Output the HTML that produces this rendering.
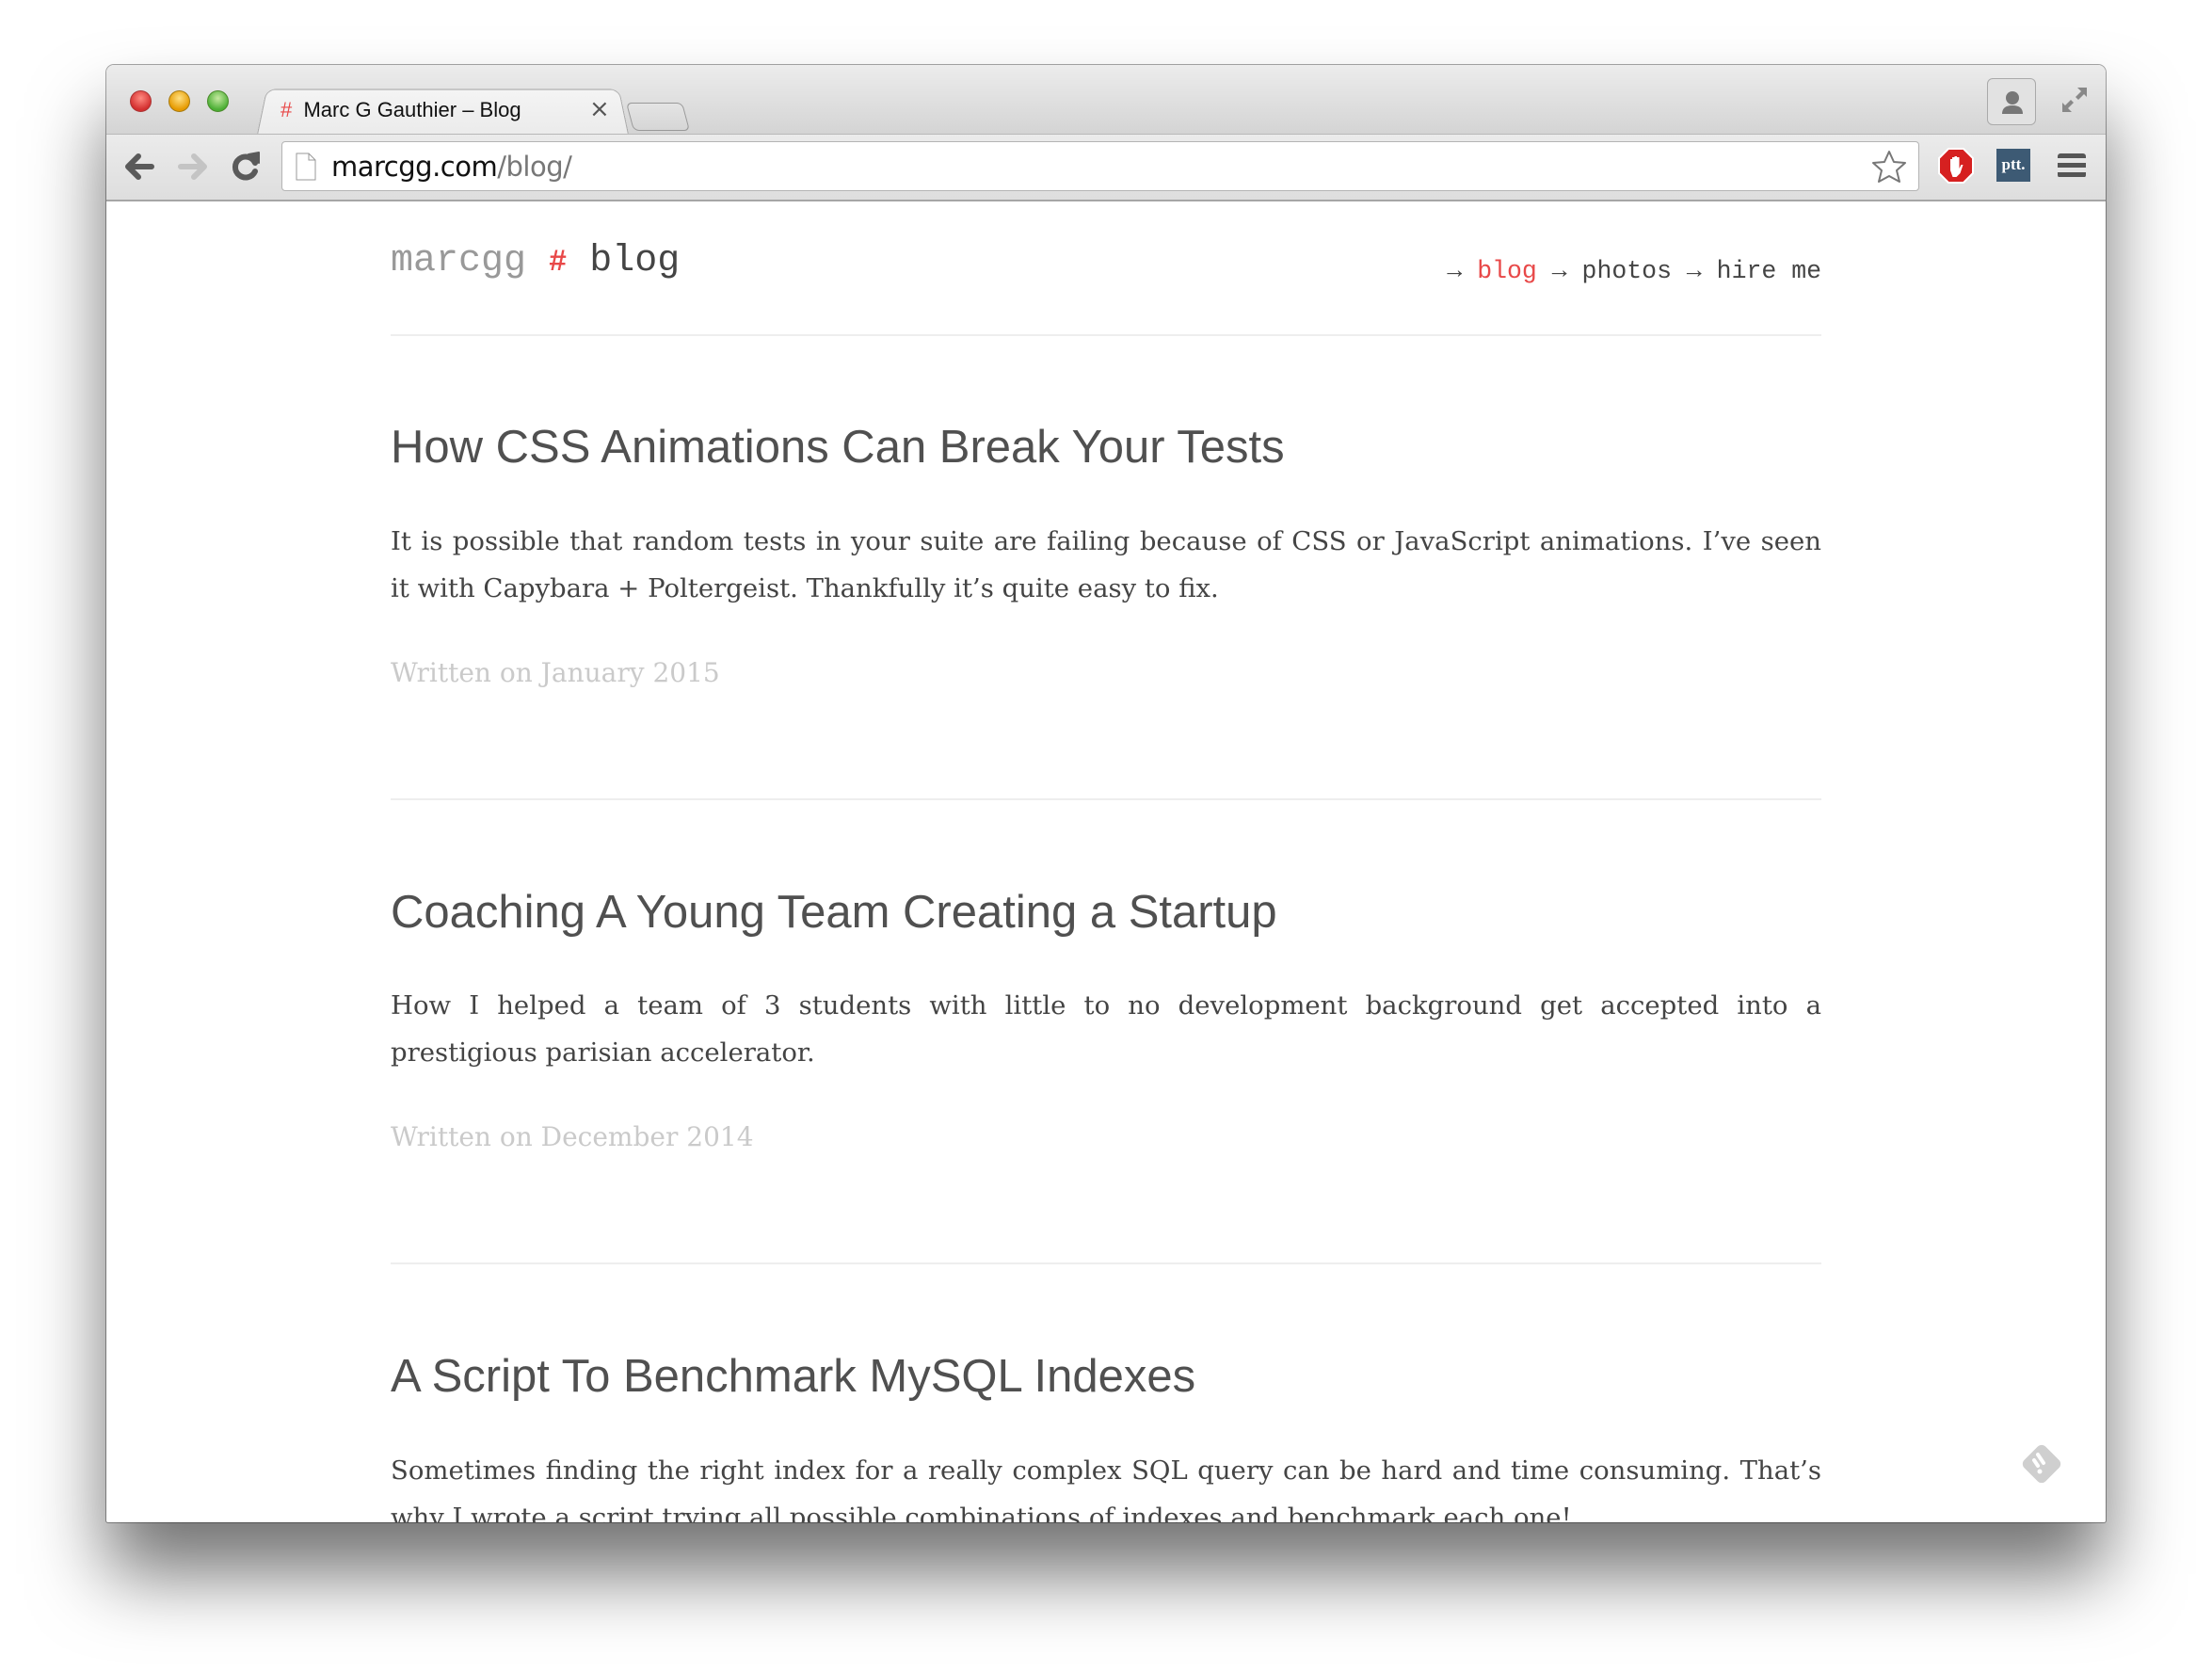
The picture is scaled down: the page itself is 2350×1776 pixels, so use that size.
<!DOCTYPE html>
<html><head><meta charset="utf-8">
<style>
*{margin:0;padding:0;box-sizing:border-box}
html,body{width:2350px;height:1776px;background:#fff;overflow:hidden}
.win{position:absolute;left:113px;top:69px;width:2124px;height:1548px;border-radius:8px 8px 2px 2px;background:#fff;box-shadow:0 55px 80px rgba(0,0,0,0.55),0 0 0 1px rgba(0,0,0,0.35);overflow:hidden}
.tabbar{position:absolute;left:0;top:0;width:100%;height:73px;background:linear-gradient(#ececec,#d4d4d4)}
.toolbar{position:absolute;left:0;top:73px;width:100%;height:72px;background:linear-gradient(#ebebeb,#dedede);border-bottom:2px solid #a6a6a6;border-top:1px solid #b8b8b8}
.dot{position:absolute;top:27px;width:23px;height:23px;border-radius:50%}
.tab{position:absolute;left:160px;top:22px;width:395px;height:52px;background:linear-gradient(#f4f4f4,#ebebeb);border:1px solid #aaa;border-bottom:none;border-radius:10px 10px 0 0;transform:perspective(200px) rotateX(12deg);transform-origin:bottom}
.tabt{position:absolute;left:185px;top:35px;font:22px "Liberation Sans",sans-serif;color:#111}
.newtab{position:absolute;left:556px;top:40px;width:60px;height:30px;border:1px solid #999;border-radius:6px;background:linear-gradient(#e4e4e4,#d6d6d6);transform:skewX(15deg)}
.omni{position:absolute;left:186px;top:7px;width:1740px;height:53px;background:#fff;border:1px solid #b4b4b4;border-radius:4px}
.url{position:absolute;left:52px;top:9px;font:29px "DejaVu Sans",sans-serif;color:#111;letter-spacing:-0.5px}
.content{position:absolute;left:0;top:146px;width:100%}
.logo{position:absolute;top:40px;left:302px;font:40px "Liberation Mono",monospace;color:#999}
.nav{position:absolute;top:58px;right:302px;font:26.5px "Liberation Mono",monospace;color:#444}
.hr{position:absolute;left:302px;width:1520px;height:2px;background:#eee}
h2{position:absolute;left:302px;font:400 49px "Liberation Sans",sans-serif;color:#505050;white-space:nowrap}
.p{position:absolute;left:302px;width:1520px;font:27.5px/50px "DejaVu Serif",serif;color:#444}
.j{text-align:justify;text-align-last:justify;white-space:nowrap;display:block}
.d{position:absolute;left:302px;font:28px "DejaVu Serif",serif;color:#cacaca}
</style></head><body>
<div class="win">
 <div class="tabbar">
  <div class="dot" style="left:25px;background:radial-gradient(circle at 50% 35%,#ff8a80,#d32f2f 70%);border:1px solid #a33"></div>
  <div class="dot" style="left:66px;background:radial-gradient(circle at 50% 35%,#ffe082,#e69a00 70%);border:1px solid #a77a10"></div>
  <div class="dot" style="left:107px;background:radial-gradient(circle at 50% 35%,#c5e9a0,#4caf35 70%);border:1px solid #4a8a2a"></div>
  <div class="tab"></div>
  <div class="tabt"><span style="color:#e84848">#</span>&nbsp; Marc G Gauthier – Blog</div>
  <div style="position:absolute;left:513px;top:32px;font:26px 'DejaVu Sans',sans-serif;color:#555">×</div>
  <div class="newtab"></div>
  <div style="position:absolute;left:1998px;top:14px;width:52px;height:50px;border:1px solid #aaa;border-radius:6px;background:#e2e2e2">
   <svg width="52" height="50" viewBox="0 0 52 50"><circle cx="26" cy="20" r="7" fill="#777"/><path d="M15 37 Q15 28 26 28 Q37 28 37 37Z" fill="#777"/></svg>
  </div>
  <svg style="position:absolute;left:2074px;top:20px" width="34" height="34" viewBox="0 0 34 34"><path d="M20 4h10v10l-3-3-6 6-3-3 6-6zM14 30H4V20l3 3 6-6 3 3-6 6z" fill="#888"/></svg>
 </div>
 <div class="toolbar">
  <svg style="position:absolute;left:0;top:0" width="180" height="70" viewBox="0 0 180 70">
   <path d="M48 34H24M34 23L23 34l11 11" fill="none" stroke="#5a5a5a" stroke-width="6" stroke-linecap="round" stroke-linejoin="round"/>
   <path d="M79 34h24M93 23l11 11-11 11" fill="none" stroke="#c4c4c4" stroke-width="6" stroke-linecap="round" stroke-linejoin="round"/>
   <path d="M158 30a11 11 0 1 0 0 9" fill="none" stroke="#5a5a5a" stroke-width="6" stroke-linecap="round"/><path d="M151 21l11-2v11z" fill="#5a5a5a" stroke="#5a5a5a" stroke-width="2" stroke-linejoin="round"/>
  </svg>
  <div class="omni">
   <svg style="position:absolute;left:14px;top:11px" width="22" height="30" viewBox="0 0 22 30"><path d="M1 1h13l7 7v21H1z" fill="#fff" stroke="#999"/><path d="M14 1v7h7" fill="none" stroke="#999"/></svg>
   <div class="url">marcgg.com<span style="color:#777">/blog/</span></div>
   <svg style="position:absolute;right:12px;top:8px" width="38" height="36" viewBox="0 0 38 36"><path d="M19 2l5 11 12 1-9 8 3 12-11-6-11 6 3-12-9-8 12-1z" fill="#fff" stroke="#777" stroke-width="2" stroke-linejoin="round"/></svg>
  </div>
  <svg style="position:absolute;left:1946px;top:14px" width="38" height="38" viewBox="0 0 38 38"><path d="M11 1h16l10 10v16L27 37H11L1 27V11z" fill="#d62020" stroke="#fff" stroke-width="2"/><path d="M13 24V12h2v8-10h2.5v10-11h2.5v11-10h2.5v12l2-4h2l-3 9-4 4h-4z" fill="#fff"/></svg>
  <div style="position:absolute;left:2008px;top:15px;width:36px;height:35px;background:#3d5a74;color:#fff;font:bold 17px 'Liberation Serif',serif;text-align:center;line-height:33px">ptt.</div>
  <div style="position:absolute;left:2073px;top:20px;width:30px;height:26px;background:repeating-linear-gradient(#555 0 5px,transparent 5px 10px);border-radius:3px"></div>
 </div>
 <div class="content">
  <div class="logo">marcgg <span style="color:#e84848;font-size:32px;font-weight:bold">#</span> <span style="color:#444">blog</span></div>
  <div class="nav">→ <span style="color:#e84848">blog</span> → photos → hire me</div>
  <div class="hr" style="top:140px"></div>
  <h2 style="top:232px">How CSS Animations Can Break Your Tests</h2>
  <div class="p" style="top:335px"><span class="j">It is possible that random tests in your suite are failing because of CSS or JavaScript animations. I’ve seen</span>it with Capybara + Poltergeist. Thankfully it’s quite easy to fix.</div>
  <div class="d" style="top:483px">Written on January 2015</div>
  <div class="hr" style="top:633px"></div>
  <h2 style="top:726px">Coaching A Young Team Creating a Startup</h2>
  <div class="p" style="top:828px"><span class="j">How I helped a team of 3 students with little to no development background get accepted into a</span>prestigious parisian accelerator.</div>
  <div class="d" style="top:976px">Written on December 2014</div>
  <div class="hr" style="top:1126px"></div>
  <h2 style="top:1219px">A Script To Benchmark MySQL Indexes</h2>
  <div class="p" style="top:1322px"><span class="j">Sometimes finding the right index for a really complex SQL query can be hard and time consuming. That’s</span>why I wrote a script trying all possible combinations of indexes and benchmark each one!</div>
  <svg style="position:absolute;left:2030px;top:1318px" width="52" height="48" viewBox="0 0 52 48"><rect x="10" y="6" width="32" height="32" rx="6" transform="rotate(45 26 22)" fill="#cfcfcf"/><path d="M22 12l6 9M18 18l4 6" stroke="#fff" stroke-width="4" stroke-linecap="round"/><circle cx="24" cy="30" r="2.5" fill="#fff"/></svg>
 </div>
</div>
</body></html>
